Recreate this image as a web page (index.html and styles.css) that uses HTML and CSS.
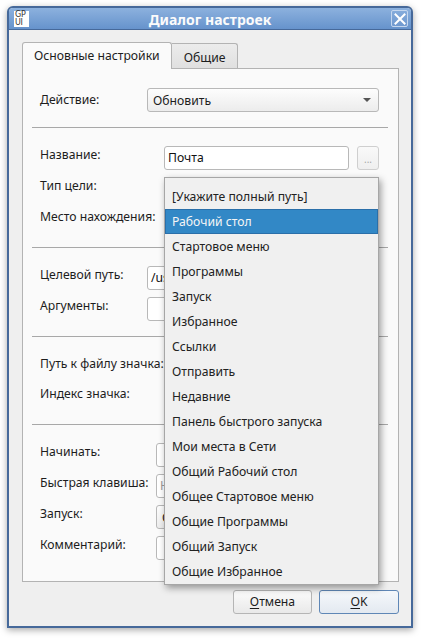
FILE: index.html
```html
<!DOCTYPE html>
<html lang="ru">
<head>
<meta charset="utf-8">
<title>Диалог настроек</title>
<link rel="stylesheet" href="styles.css">
</head>
<body>
<div class="window">
  <div class="titlebar">
    <div class="appicon"><span>GP</span><span>UI</span></div>
    <div class="title">Диалог настроек</div>
    <div class="close"><svg width="12" height="12" viewBox="0 0 12 12"><path d="M1.5 1.5 L10.5 10.5 M10.5 1.5 L1.5 10.5" stroke="#fff" stroke-width="2" stroke-linecap="square"/></svg></div>
  </div>
  <div class="body">
    <div class="tabs">
      <div class="tab active">Основные настройки</div>
      <div class="tab">Общие</div>
    </div>
    <div class="panel">
      <div class="sec first">
        <div class="form g1 center">
          <div class="lab">Действие:</div>
          <div class="combo"><span>Обновить</span><i class="arrow"></i></div>
        </div>
      </div>
      <div class="sep"></div>
      <div class="sec">
        <div class="form g2">
          <div class="lab">Название:</div>
          <div class="pair"><div class="input">Почта</div><div class="dots">...</div></div>
          <div class="lab">Тип цели:</div>
          <div class="combo"><span></span><i class="arrow"></i></div>
          <div class="lab">Место нахождения:</div>
          <div class="combo"><span></span><i class="arrow"></i></div>
        </div>
      </div>
      <div class="sep"></div>
      <div class="sec">
        <div class="form g1">
          <div class="lab">Целевой путь:</div>
          <div class="input">/usr/bin/thunderbird</div>
          <div class="lab">Аргументы:</div>
          <div class="input"></div>
        </div>
      </div>
      <div class="sep"></div>
      <div class="sec">
        <div class="form g4">
          <div class="lab">Путь к файлу значка:</div>
          <div class="input"></div>
          <div class="lab">Индекс значка:</div>
          <div class="input"></div>
        </div>
      </div>
      <div class="sep"></div>
      <div class="sec">
        <div class="form g5">
          <div class="lab">Начинать:</div>
          <div class="input"></div>
          <div class="lab">Быстрая клавиша:</div>
          <div class="input placeholder">Нет</div>
          <div class="lab">Запуск:</div>
          <div class="combo"><span>Стандартный размер окна</span><i class="arrow"></i></div>
          <div class="lab">Комментарий:</div>
          <div class="input"></div>
        </div>
      </div>
    </div>
    <div class="buttons">
      <div class="btn"><u>О</u>тмена</div>
      <div class="btn default"><u>O</u>K</div>
    </div>
  </div>
  <div class="popup">
    <div class="item">[Укажите полный путь]</div>
    <div class="item selected">Рабочий стол</div>
    <div class="item">Стартовое меню</div>
    <div class="item">Программы</div>
    <div class="item">Запуск</div>
    <div class="item">Избранное</div>
    <div class="item">Ссылки</div>
    <div class="item">Отправить</div>
    <div class="item">Недавние</div>
    <div class="item">Панель быстрого запуска</div>
    <div class="item">Мои места в Сети</div>
    <div class="item">Общий Рабочий стол</div>
    <div class="item">Общее Стартовое меню</div>
    <div class="item">Общие Программы</div>
    <div class="item">Общий Запуск</div>
    <div class="item">Общие Избранное</div>
  </div>
</div>
</body>
</html>
```

FILE: styles.css
```css
* { box-sizing: border-box; }
html, body { margin: 0; padding: 0; background: #ffffff; }
body {
  font-family: "Noto Sans", "Open Sans", sans-serif;
  font-size: 12.2px;
  color: #1d1d1d;
  width: 426px;
  height: 643px;
  overflow: hidden;
}
.window {
  position: relative;
  margin: 6px 0 0 7px;
  width: 406px;
  height: 622px;
  border: 2px solid #46699a;
  border-radius: 6px 6px 0 0;
  background: #efefef;
  box-shadow: 0 2px 7px rgba(0,0,0,0.35);
}
.titlebar {
  height: 22px;
  border-bottom: 1px solid #46699a;
  background: linear-gradient(#8cb1de, #6693cc);
  border-radius: 4px 4px 0 0;
  display: flex;
  align-items: center;
  padding: 0 3px 0 5px;
}
.appicon {
  width: 15px;
  height: 16px;
  background: #fff;
  display: flex;
  flex-direction: column;
  justify-content: center;
  padding-left: 1px;
  font-family: "DejaVu Sans", sans-serif;
  font-size: 8px;
  line-height: 7.5px;
  letter-spacing: -0.3px;
  color: #333;
}
.title {
  flex: 1;
  text-align: center;
  color: #fbfbfb;
  font-weight: bold;
  font-size: 14px;
  padding-top: 1px;
}
.close {
  width: 17px;
  height: 17px;
  border: 1px solid #c4d6ee;
  border-radius: 2px;
  background: linear-gradient(#84abdb, #7099cf);
  display: flex;
  align-items: center;
  justify-content: center;
}
.body {
  padding: 12px 12px 12px 13px;
}
.tabs {
  display: flex;
  align-items: flex-end;
  height: 26px;
}
.tab {
  border: 1px solid #b3b3b3;
  border-bottom: none;
  border-radius: 3px 3px 0 0;
  padding: 0 11px;
  display: flex;
  align-items: center;
}
.tab.active {
  height: 27px;
  margin-bottom: -1px;
  background: #fafafa;
  position: relative;
  z-index: 1;
  padding-bottom: 1px;
}
.tab:not(.active) {
  height: 25px;
  border-left: none;
  background: linear-gradient(#ececec, #e0e0e0);
  padding: 2px 12px 0 12px;
  border-radius: 0 3px 0 0;
}
.panel {
  height: 514px;
  border: 1px solid #b3b3b3;
  background: #fafafa;
  padding: 0 10px 0 9px;
}
.sec { padding: 18px 9px 0 8px; }
.sec.first { padding-top: 19px; }
.sep {
  height: 1px;
  background: #a8a8a8;
  margin-top: 15px;
}
.form {
  display: grid;
  row-gap: 7px;
  align-items: start;
}
.form.center { align-items: center; }
.g1 { grid-template-columns: 107px 1fr; }
.g2 { grid-template-columns: 124px 1fr; }
.g4 { grid-template-columns: 130px 1fr; row-gap: 6px; }
.g5 { grid-template-columns: 116px 1fr; }
.lab {
  line-height: 17px;
  white-space: nowrap;
}
.center .lab { line-height: 24px; }
.input {
  height: 24px;
  background: #ffffff;
  border: 1px solid #b8b8b8;
  border-radius: 3px;
  padding: 0 3px;
  line-height: 22px;
  color: #111;
  white-space: nowrap;
  overflow: hidden;
}
.input.placeholder { color: #9a9a9a; }
.pair { display: flex; gap: 8px; }
.pair .input { flex: 1; }
.dots {
  width: 22px;
  height: 24px;
  border: 1px solid #cfcfcf;
  border-radius: 3px;
  background: linear-gradient(#f9f9f9, #efefef);
  color: #a8a8a8;
  font-size: 10px;
  text-align: center;
  line-height: 24px;
}
.combo {
  height: 24px;
  border: 1px solid #b8b8b8;
  border-radius: 3px;
  background: linear-gradient(#fdfdfd, #ececec);
  display: flex;
  align-items: center;
  padding: 0 7px 0 5px;
  white-space: nowrap;
  overflow: hidden;
}
.combo span { flex: 1; overflow: hidden; }
.arrow {
  width: 0;
  height: 0;
  border-left: 4px solid transparent;
  border-right: 4px solid transparent;
  border-top: 4px solid #555;
}
.buttons {
  display: flex;
  justify-content: flex-end;
  gap: 7px;
  margin-top: 8px;
}
.btn {
  width: 79px;
  height: 24px;
  border: 1px solid #b5b5b5;
  border-radius: 3px;
  background: linear-gradient(#fbfbfb, #e9e9e9);
  text-align: center;
  line-height: 22px;
}
.btn.default {
  width: 80px;
  border-color: #5f87b6;
  background: linear-gradient(#f5f8fb, #e3e9f0);
}
.btn u { text-decoration-thickness: 1px; text-underline-offset: 2px; }
.popup {
  position: absolute;
  left: 155px;
  top: 169px;
  width: 215px;
  border: 1px solid #a6a6a6;
  background: #f0f0f0;
  padding: 6px 0 0 0;
  box-shadow: 2px 3px 7px rgba(0,0,0,0.38);
  z-index: 5;
}
.item {
  height: 25px;
  line-height: 25px;
  padding-left: 7px;
  color: #222;
  white-space: nowrap;
}
.item.selected {
  background: #3288c6;
  color: #f5f5f5;
  box-shadow: inset 0 0 0 1px #2a6fa9;
}
```
